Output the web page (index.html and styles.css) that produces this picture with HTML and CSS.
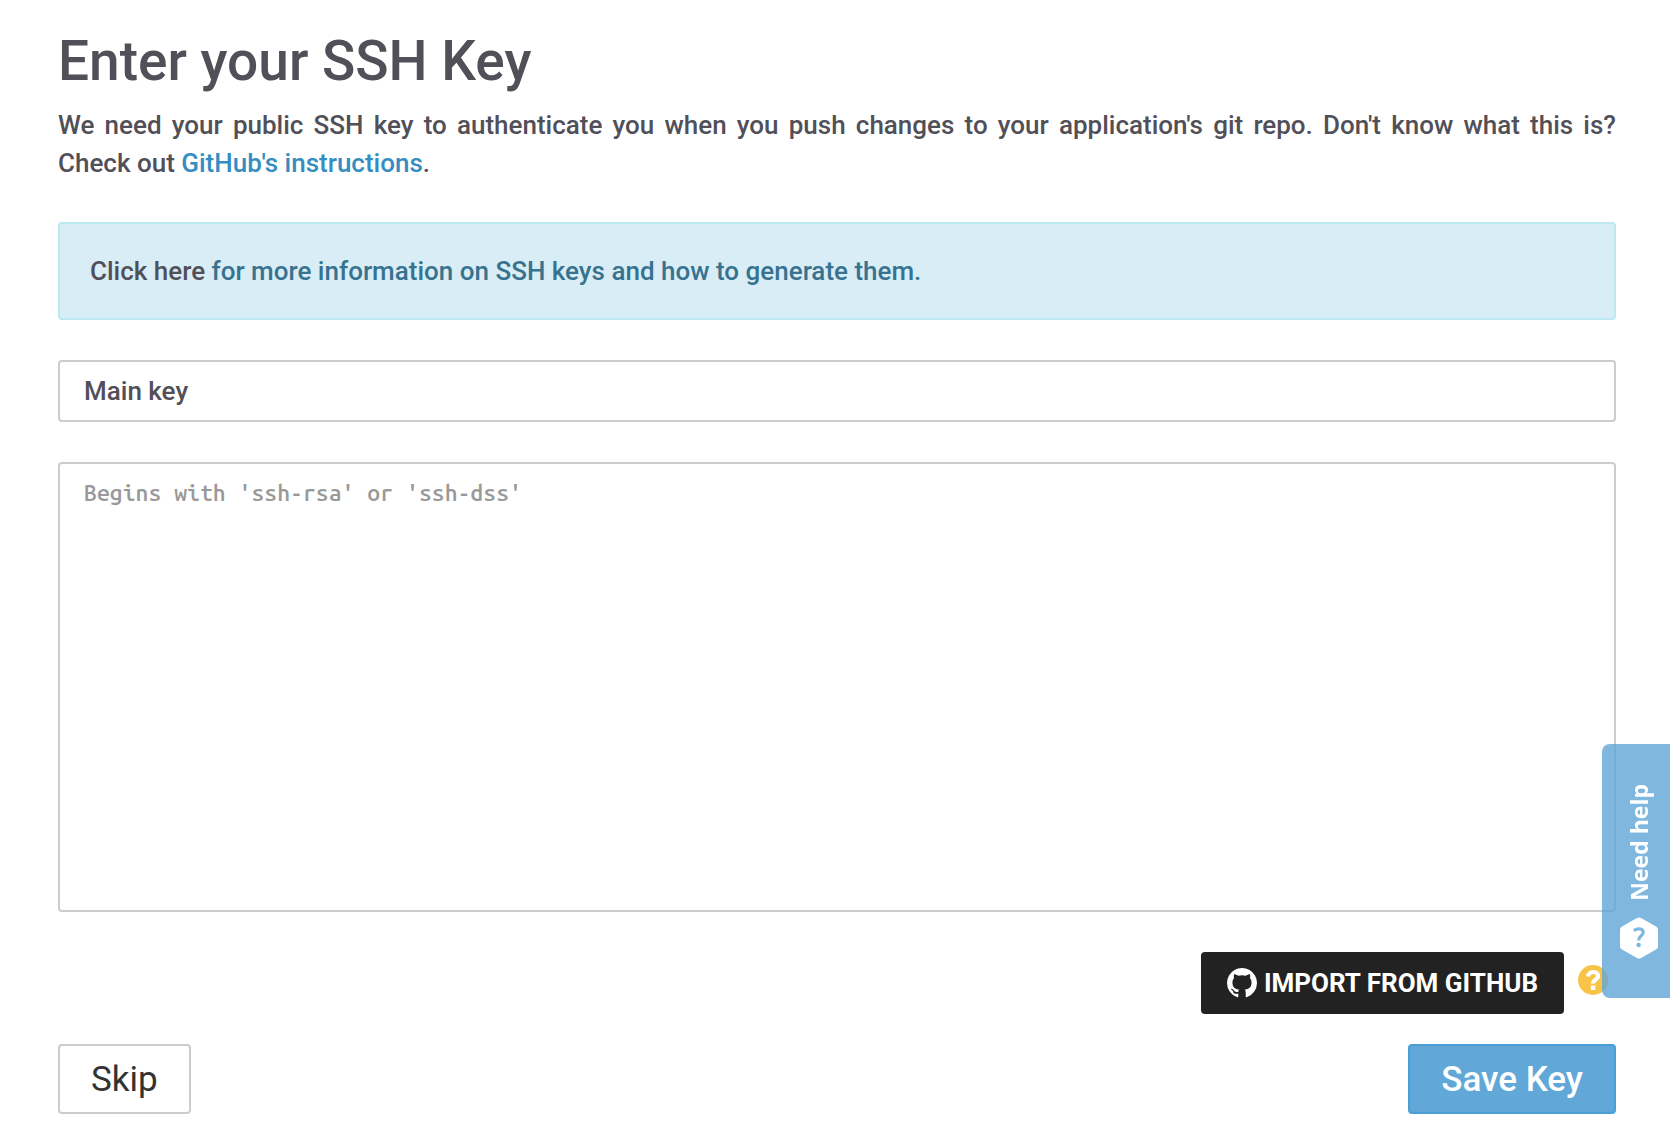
FILE: index.html
```html
<!DOCTYPE html>
<html lang="en">
<head>
<meta charset="utf-8">
<meta name="viewport" content="width=device-width, initial-scale=1">
<title>Enter your SSH Key</title>
<link rel="stylesheet" href="styles.css">
</head>
<body>
<main class="page">
  <h1 class="title">Enter your SSH Key</h1>
  <p class="intro">We need your public SSH key to authenticate you when you push changes to your application's git repo. Don't know what this is? <span class="keep">Check out <a class="link" href="#">GitHub's instructions</a>.</span></p>
  <div class="alert"><a class="alert-link" href="#">Click here</a> for more information on SSH keys and how to generate them.</div>
  <form class="form">
    <input class="field" type="text" value="Main key" aria-label="Key name">
    <textarea class="field field-key" placeholder="Begins with 'ssh-rsa' or 'ssh-dss'" aria-label="Public key"></textarea>
    <div class="import-row">
      <button class="btn-import" type="button">
        <svg class="github-icon" viewBox="128 128 1536 1536" aria-hidden="true"><path fill="currentColor" d="M896 128q209 0 385.500 103t279.500 279.500 103 385.500q0 251-146.500 451.500t-378.500 277.500q-27 5-40-7t-13-30q0-3 .5-76.500t.5-134.500q0-97-52-142 57-6 102.500-18t94-39 81-66.500 53-105 20.500-150.500q0-119-79-206 37-91-8-204-28-9-81 11t-92 44l-38 24q-93-26-192-26t-192 26q-16-11-42.500-27t-83.500-38.500-85-13.500q-45 113-8 204-79 87-79 206 0 85 20.500 150t52.500 105 80.500 67 94 39 102.500 18q-39 36-49 103-21 10-45 15t-57 5-65.500-21.500-55.500-62.500q-19-32-48.500-52t-49.500-24l-20-3q-21 0-29 4.500t-5 11.500 9 14 13 12l7 5q22 10 43.500 38t31.500 51l10 23q13 38 44 61.500t67 30 69.500 7 55.500-3.500l23-4q0 38 .5 88.500t.5 54.500q0 18-13 30t-40 7q-232-77-378.500-277.500t-146.500-451.500q0-209 103-385.500t279.500-279.500 385.500-103z"/></svg>
        <span>IMPORT FROM GITHUB</span>
      </button>
      <a class="hint" href="#" aria-label="About importing keys">
        <svg class="hint-icon" viewBox="0 0 30 30" aria-hidden="true"><circle cx="15" cy="15" r="15" fill="#f8c447"/><path d="M10 11.500C10.500 5.500 20.500 5.500 20 11.500C19.700 15 15 14.500 15 18.500" fill="none" stroke="#fff" stroke-width="4.200"/><path d="M12.800 20.500h4.600v4.500h-4.600z" fill="#fff"/></svg>
      </a>
    </div>
    <div class="actions">
      <button class="btn btn-default" type="button">Skip</button>
      <button class="btn btn-primary" type="submit">Save Key</button>
    </div>
  </form>
</main>
<button class="help-tab" type="button">
  <span class="help-label">Need help</span>
  <svg class="help-icon" viewBox="0 0 38 42" aria-hidden="true"><path d="M17 1q2-1 4 0l15 8.500q2 1 2 3v17q0 2-2 3L21 41q-2 1-4 0L2 32.500q-2-1-2-3v-17q0-2 2-3z" fill="#fff"/><path d="M13.800 13.500C19 10.500 23.500 12 23.200 15.500C23 19 18.600 18.500 18.600 23.500" fill="none" stroke="#80b7df" stroke-width="3.200"/><circle cx="18.600" cy="28" r="2.300" fill="#80b7df"/></svg>
</button>
</body>
</html>
```

FILE: styles.css
```css
* {
  box-sizing: border-box;
}

body {
  margin: 0;
  background: #fff;
  color: #514f58;
  font-family: Roboto, "Liberation Sans", sans-serif;
  font-size: 26px;
  font-weight: 500;
  line-height: 38px;
}

.page {
  padding: 30px 54px 12px 58px;
}

.title {
  margin: 0 0 14px;
  font-size: 55px;
  font-weight: 500;
  line-height: 62px;
}

.intro {
  margin: 0 0 40px;
  text-align: justify;
}

.keep {
  white-space: nowrap;
}

.link {
  color: #368dc1;
  text-decoration: none;
}

.alert {
  margin-bottom: 40px;
  padding: 28px 30px;
  border: 2px solid #bce8f1;
  border-radius: 4px;
  background: #d9edf7;
  color: #37738f;
}

.alert-link {
  color: #514f58;
  text-decoration: none;
}

.form {
  display: flex;
  flex-direction: column;
}

.field {
  width: 100%;
  height: 62px;
  margin: 0 0 40px;
  padding: 10px 24px;
  border: 2px solid #ccc;
  border-radius: 4px;
  background: #fff;
  color: inherit;
  font: inherit;
}

.field-key {
  height: 450px;
  font-family: "Ubuntu Mono", "DejaVu Sans Mono", monospace;
  font-size: 23px;
  resize: none;
}

.field::placeholder {
  color: #999;
  opacity: 1;
}

.import-row {
  display: flex;
  justify-content: flex-end;
  align-items: flex-start;
  gap: 14px;
  margin-bottom: 30px;
  padding-right: 8px;
}

.hint {
  padding-top: 13px;
}

.btn-import {
  display: flex;
  align-items: center;
  gap: 7px;
  height: 62px;
  padding: 0 26px;
  border: 0;
  border-radius: 4px;
  background: #222;
  color: #fff;
  font: inherit;
  font-weight: 700;
}

.github-icon,
.hint-icon {
  display: block;
  width: 30px;
  height: 30px;
}

.actions {
  display: flex;
  justify-content: space-between;
}

.btn {
  height: 70px;
  padding: 2px 31px 0;
  border: 2px solid #ccc;
  border-radius: 4px;
  background: #fff;
  color: #333;
  font: inherit;
  font-size: 35px;
}

.btn-default {
  font-weight: 400;
}

.btn-primary {
  border-color: #4b9fd5;
  background: #61a8d9;
  color: #fff;
}

.help-tab {
  position: fixed;
  right: 0;
  bottom: 128px;
  display: flex;
  flex-direction: column;
  align-items: center;
  justify-content: space-between;
  width: 68px;
  height: 254px;
  padding: 40px 6px 39px 12px;
  border: 0;
  border-radius: 8px 0 0 8px;
  background: rgba(96, 165, 215, 0.8);
  color: #fff;
  font-family: "Open Sans", sans-serif;
  font-size: 23px;
  font-weight: 700;
  line-height: 34px;
}

.help-label {
  writing-mode: vertical-rl;
  transform: rotate(180deg);
}

.help-icon {
  display: block;
  width: 38px;
  height: 42px;
}
```
